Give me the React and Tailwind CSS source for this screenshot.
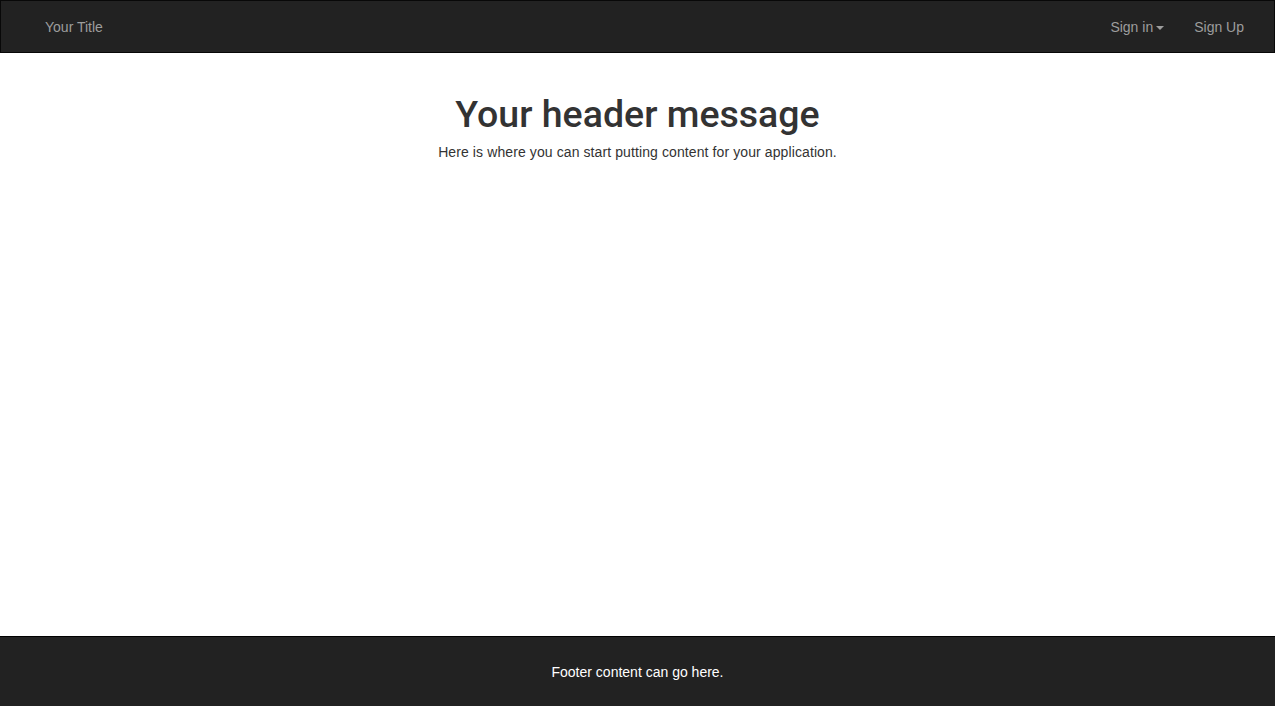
const App = () => {
  return (
    <div className="min-h-screen flex flex-col bg-white font-['Liberation_Sans',Arial,sans-serif] text-[#333]">
      {/* Top navbar */}
      <nav className="h-[53px] flex items-center justify-between bg-[#222] border border-[#080808] px-[30px] text-[14px] text-[#9d9d9d]">
        <a className="ml-[14px] mt-[1px]">Your Title</a>
        <div className="flex items-center gap-[30px] mt-[1px]">
          <a className="flex items-center">
            Sign in
            <span className="ml-[3px] mt-[2px] w-0 h-0 border-l-[4px] border-r-[4px] border-t-[4px] border-l-transparent border-r-transparent border-t-[#9d9d9d]"></span>
          </a>
          <a>Sign Up</a>
        </div>
      </nav>

      {/* Main content */}
      <main className="flex-1 flex flex-col items-center">
        <h1 className="mt-[41px] font-['Roboto',Arial,sans-serif] font-medium text-[37.5px] leading-[1.1] text-[#333]">
          Your header message
        </h1>
        <p className="mt-[7px] text-[14px] leading-[20px] tracking-[0.1px] text-[#333]">
          Here is where you can start putting content for your application.
        </p>
      </main>

      {/* Footer */}
      <footer className="h-[70px] flex items-center justify-center bg-[#222] border-t border-black text-white text-[14px] pt-[2px]">
        Footer content can go here.
      </footer>
    </div>
  );
};

export default App;
